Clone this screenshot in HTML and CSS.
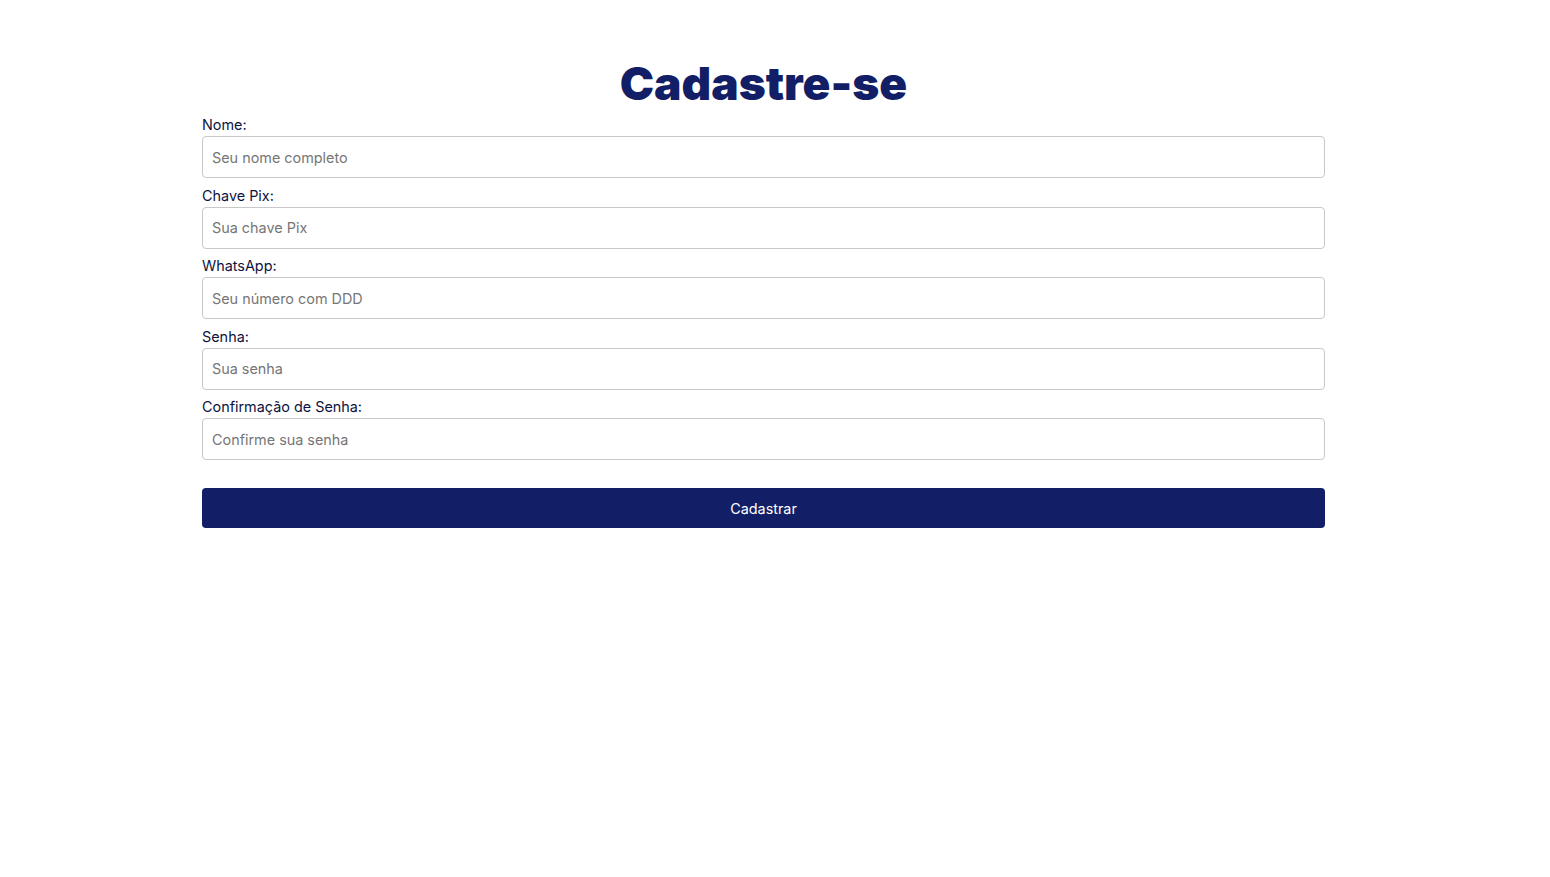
FILE: index.html
```html
<!DOCTYPE html>
<html lang="pt-BR">
<head>
<meta charset="UTF-8">
<title>Cadastre-se</title>
<link rel="stylesheet" href="styles.css">
</head>
<body>
<main class="container">
  <h1 class="title">Cadastre-se</h1>
  <form class="form">
    <div class="field">
      <label class="label" for="nome">Nome:</label>
      <input class="input" id="nome" type="text" placeholder="Seu nome completo">
    </div>
    <div class="field">
      <label class="label" for="pix">Chave Pix:</label>
      <input class="input" id="pix" type="text" placeholder="Sua chave Pix">
    </div>
    <div class="field">
      <label class="label" for="whats">WhatsApp:</label>
      <input class="input" id="whats" type="text" placeholder="Seu número com DDD">
    </div>
    <div class="field">
      <label class="label" for="senha">Senha:</label>
      <input class="input" id="senha" type="password" placeholder="Sua senha">
    </div>
    <div class="field">
      <label class="label" for="conf">Confirmação de Senha:</label>
      <input class="input" id="conf" type="password" placeholder="Confirme sua senha">
    </div>
    <button class="button" type="button">Cadastrar</button>
  </form>
</main>
</body>
</html>
```
FILE: styles.css
```css
* { box-sizing: border-box; }
html, body { margin: 0; padding: 0; background: #fff; }
body {
  font-family: Inter, "Noto Sans", sans-serif;
  color: #0d1440;
}
.container {
  width: 1123px;
  margin-left: 202px;
  padding-top: 54px;
}
.title {
  margin: 0 0 4px;
  text-align: center;
  font-size: 46px;
  font-weight: 900;
  line-height: 58px;
  color: #121e66;
}
.form { display: flex; flex-direction: column; }
.field { display: flex; flex-direction: column; margin-bottom: 8.5px; }
.label {
  font-size: 14.4px;
  line-height: 18px;
  margin-bottom: 2px;
  color: #0d1440;
}
.input {
  height: 42px;
  padding: 0 9px;
  border: 1px solid #c8c8c8;
  border-radius: 4px;
  font-family: Inter, "Noto Sans", sans-serif;
  font-size: 14.4px;
  color: #222;
  outline: none;
}
.input::placeholder { color: #767676; }
.button {
  margin-top: 19.5px;
  height: 40px;
  border: none;
  border-radius: 4px;
  background: #121e66;
  color: #fff;
  font-family: Inter, "Noto Sans", sans-serif;
  font-size: 14.4px;
  font-weight: 400;
  cursor: pointer;
}
```
